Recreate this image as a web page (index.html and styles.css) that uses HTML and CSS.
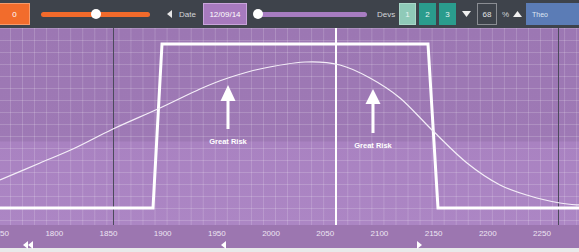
FILE: index.html
```html
<!DOCTYPE html>
<html lang="en">
<head>
    <meta charset="UTF-8">
    <meta name="viewport" content="width=device-width, initial-scale=1.0">
    <title>Risk Chart</title>
    <link rel="stylesheet" href="styles.css">
</head>
<body>
    <div class="toolbar">
        <div class="num-box orange">0</div>
        <div class="slider orange-slider">
            <div class="track"></div>
            <div class="knob" style="left: 50%"></div>
        </div>
        <svg class="tri tri-left" width="5" height="8" viewBox="0 0 5 8"><polygon points="5,0 0,4 5,8" fill="#e6e6e6"/></svg>
        <span class="label date-label">Date</span>
        <div class="num-box date-box">12/09/14</div>
        <div class="slider purple-slider">
            <div class="track"></div>
            <div class="knob" style="left: 0"></div>
        </div>
        <span class="label devs-label">Devs</span>
        <button class="dev-btn dev-active">1</button>
        <button class="dev-btn">2</button>
        <button class="dev-btn">3</button>
        <svg class="tri tri-down" width="9" height="6" viewBox="0 0 9 6"><polygon points="0,0 9,0 4.5,6" fill="#f0f0f0"/></svg>
        <div class="num-box pct-box">68</div>
        <span class="label pct-label">%</span>
        <svg class="tri tri-up" width="9" height="6" viewBox="0 0 9 6"><polygon points="0,6 9,6 4.5,0" fill="#f0f0f0"/></svg>
        <div class="theo-box">Theo</div>
    </div>

    <div class="chart">
        <svg class="plot" width="579" height="197" viewBox="0 28 579 197">
            <!-- markers -->
            <line x1="113.5" y1="28" x2="113.5" y2="225" stroke="#4c4a5c" stroke-width="1"/>
            <line x1="558.5" y1="28" x2="558.5" y2="225" stroke="#4c4a5c" stroke-width="1"/>
            <line x1="336" y1="28" x2="336" y2="225" stroke="#fff" stroke-width="2"/>

            <!-- risk profile -->
            <polyline points="-5,208 153,208 162,44 428,44 438,208 585,208" fill="none" stroke="#fff" stroke-width="3"/>

            <!-- distribution -->
            <path fill="none" stroke="#f4eef8" stroke-width="1.2"
                d="M0,180 C6.7,177.2 27.5,168.3 40,163
                   C52.5,157.7 62.8,153.7 75,148
                   C87.2,142.3 98.8,135.7 113,129
                   C127.2,122.3 145.5,114.7 160,108
                   C174.5,101.3 188.7,94 200,89
                   C211.3,84 218,81.3 228,78
                   C238,74.7 247.2,71.7 260,69
                   C272.8,66.3 291.7,62.7 305,62
                   C318.3,61.3 329.2,62.3 340,65
                   C350.8,67.7 360,72.5 370,78
                   C380,83.5 389.5,89.2 400,98
                   C410.5,106.8 421.8,120.2 433,131
                   C444.2,141.8 455.8,154 467,163
                   C478.2,172 489.5,179.5 500,185
                   C510.5,190.5 520,193 530,196
                   C540,199 551.7,201.5 560,203
                   C568.3,204.5 576.7,204.7 580,205"/>

            <!-- annotations -->
            <polygon points="228,85 220.5,101 235.5,101" fill="#fff"/>
            <rect x="226.5" y="100" width="3" height="29" fill="#fff"/>
            <text class="note" x="228" y="144" text-anchor="middle">Great Risk</text>

            <polygon points="373,89 365.5,104 380.5,104" fill="#fff"/>
            <rect x="371.5" y="103" width="3" height="30" fill="#fff"/>
            <text class="note" x="373" y="148" text-anchor="middle">Great Risk</text>
        </svg>
    </div>

    <div class="axis">
        <div class="ticks">
            <span>1750</span>
            <span>1800</span>
            <span>1850</span>
            <span>1900</span>
            <span>1950</span>
            <span>2000</span>
            <span>2050</span>
            <span>2100</span>
            <span>2150</span>
            <span>2200</span>
            <span>2250</span>
        </div>
        <div class="nav">
            <svg class="nav-fast" width="10" height="8" viewBox="0 0 10 8"><polygon points="5,0 0,4 5,8" fill="#fff"/><polygon points="10,0 5,4 10,8" fill="#fff"/></svg>
            <svg class="nav-prev" width="5" height="8" viewBox="0 0 5 8"><polygon points="5,0 0,4 5,8" fill="#fff"/></svg>
            <svg class="nav-next" width="5" height="8" viewBox="0 0 5 8"><polygon points="0,0 5,4 0,8" fill="#fff"/></svg>
        </div>
    </div>
    <div class="footer"></div>
</body>
</html>
```

FILE: styles.css
```css
body {
    font-family: "Liberation Sans", Arial, sans-serif;
    margin: 0;
    padding: 0;
    width: 579px;
    height: 252px;
    overflow: hidden;
    background-color: #e9e9ea;
}
.toolbar {
    display: flex;
    align-items: center;
    height: 28px;
    background-color: #3e434b;
    color: #d4d6da;
    font-size: 8px;
}
.num-box {
    box-sizing: border-box;
    height: 22px;
    display: flex;
    align-items: center;
    justify-content: center;
    color: #fff;
    font-size: 8px;
}
.orange {
    width: 30px;
    background-color: #f26c2c;
    border: 1px solid #f79b6c;
    border-left: none;
}
.slider {
    position: relative;
    height: 10px;
}
.slider .track {
    position: absolute;
    left: 0;
    right: 0;
    top: 2.5px;
    height: 5px;
    border-radius: 3px;
}
.slider .knob {
    position: absolute;
    top: 0;
    width: 10px;
    height: 10px;
    margin-left: -5px;
    border-radius: 50%;
    background-color: #fff;
}
.orange-slider {
    width: 109px;
    margin-left: 11px;
}
.orange-slider .track {
    background-color: #f26a2b;
}
.purple-slider {
    width: 109px;
    margin-left: 11px;
}
.purple-slider .track {
    background-color: #a77cc1;
}
.tri {
    display: block;
    flex: none;
}
.tri-left {
    margin-left: 17px;
}
.label {
    display: inline-block;
}
.date-label {
    width: 20px;
    margin-left: 7px;
}
.date-box {
    width: 44px;
    margin-left: 4px;
    background-color: #a77abe;
    border: 1px solid #c9a4db;
}
.devs-label {
    width: 20px;
    margin-left: 10px;
}
.dev-btn {
    box-sizing: border-box;
    width: 17px;
    height: 22px;
    margin: 0 0 0 3px;
    padding: 0;
    border: none;
    background-color: #2a9c8d;
    color: #e8f4f1;
    font-family: inherit;
    font-size: 8px;
}
.dev-btn.dev-active {
    margin-left: 2px;
    background-color: #8fcab8;
    border: 1px solid #a8d8c9;
}
.tri-down {
    margin-left: 6px;
}
.pct-box {
    width: 20px;
    margin-left: 6px;
    border: 1px solid #8a8d93;
    color: #e0e2e5;
}
.pct-label {
    width: 7px;
    margin-left: 5px;
}
.tri-up {
    margin-left: 4px;
}
.theo-box {
    box-sizing: border-box;
    flex: 1;
    height: 22px;
    margin-left: 4px;
    padding-left: 6px;
    display: flex;
    align-items: center;
    background-color: #5b7cb6;
    color: #dde5f2;
    font-size: 7px;
}
.chart {
    height: 197px;
    background-color: #9d78b4;
    background-image:
        linear-gradient(to right, rgba(255, 255, 255, 0.17) 1px, transparent 1px),
        linear-gradient(to bottom, rgba(255, 255, 255, 0.17) 1px, transparent 1px),
        linear-gradient(to bottom, #9c77b3 0, #9e79b5 113px, #a982c1 114px, #ac86c4 100%);
    background-size: 12.05px 100%, 100% 12px, 100% 100%;
    background-position: 10px 0, 0 0, 0 0;
}
.plot {
    display: block;
}
.note {
    font-family: "Liberation Sans", Arial, sans-serif;
    font-size: 7.5px;
    font-weight: bold;
    fill: #fff;
}
.axis {
    height: 23px;
    background-color: #9c76b0;
}
.ticks {
    display: flex;
    margin-left: -27px;
    padding-top: 4px;
    height: 10px;
    color: #ece4f2;
    font-size: 8px;
    line-height: 10px;
}
.ticks span {
    flex: none;
    width: 54.2px;
    text-align: center;
}
.nav {
    display: flex;
    align-items: center;
    height: 9px;
    margin-top: 1px;
}
.nav svg {
    display: block;
    flex: none;
}
.nav-fast {
    margin-left: 23px;
}
.nav-prev {
    margin-left: 188px;
}
.nav-next {
    margin-left: 191px;
}
.footer {
    height: 4px;
    background-color: #e9e9ea;
}
```
